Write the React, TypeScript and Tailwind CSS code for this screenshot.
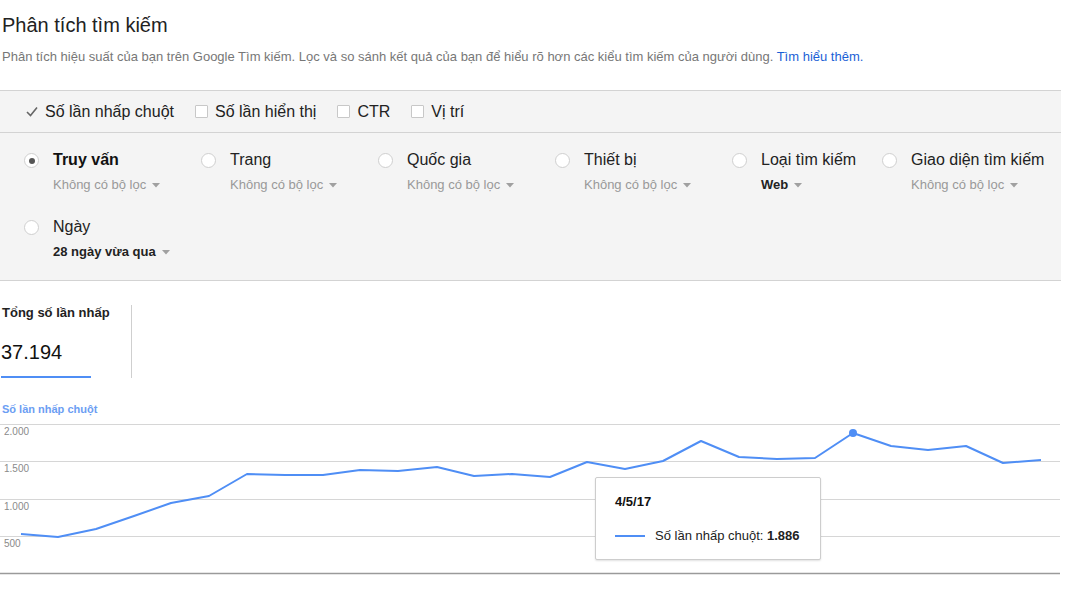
import React from 'react'

const filters = [
  { label: 'Truy vấn', sub: 'Không có bộ lọc', selected: true, w: 'w-[177px]' },
  { label: 'Trang', sub: 'Không có bộ lọc', w: 'w-[177px]' },
  { label: 'Quốc gia', sub: 'Không có bộ lọc', w: 'w-[177px]' },
  { label: 'Thiết bị', sub: 'Không có bộ lọc', w: 'w-[177px]' },
  { label: 'Loại tìm kiếm', sub: 'Web', strong: true, w: 'w-[150px]' },
  { label: 'Giao diện tìm kiếm', sub: 'Không có bộ lọc', w: 'w-[170px]' },
  { label: 'Ngày', sub: '28 ngày vừa qua', strong: true, w: 'w-[177px]' },
]

// pixel points of the clicks line, relative to the chart svg
const points: [number, number][] = [
  [21, 534], [58, 537], [96, 529], [134, 516], [171, 503], [209, 496], [247, 474],
  [285, 475], [323, 475], [360, 470], [398, 471], [437, 467], [474, 476], [512, 474],
  [550, 477], [587, 462], [625, 469], [663, 461], [701, 441], [739, 457], [777, 459],
  [815, 458], [853, 433], [891, 446], [928, 450], [966, 446], [1003, 463], [1041, 460],
]

const CHART_TOP = 416

function Caret() {
  return (
    <svg width="8" height="5" viewBox="0 0 8 5" className="ml-[6px] mt-[1px]">
      <path d="M0 0h8L4 4.5z" fill="#a0a0a0" />
    </svg>
  )
}

function Radio({ on }: { on?: boolean }) {
  return (
    <span className="mt-[3px] flex h-[15px] w-[15px] shrink-0 items-center justify-center rounded-full border border-[#cfcfcf] bg-white">
      {on && <span className="h-[6px] w-[6px] rounded-full bg-[#555]" />}
    </span>
  )
}

function Box() {
  return <span className="h-[13px] w-[13px] rounded-[1px] border border-[#c8c8c8] bg-white" />
}

function Chart() {
  const path = points.map(([x, y], i) => `${i ? 'L' : 'M'}${x} ${y - CHART_TOP}`).join(' ')
  const grid = [424.5, 461.5, 499.5, 536.5].map((y) => y - CHART_TOP)
  const labels = [
    { t: '2.000', y: 19 },
    { t: '1.500', y: 56 },
    { t: '1.000', y: 94 },
    { t: '500', y: 131 },
  ]

  return (
    <div className="relative h-[168px] w-[1061px]">
      <svg width="1061" height="168" className="block">
        {grid.map((y) => (
          <line key={y} x1="0" x2="1060" y1={y} y2={y} stroke="#d6d6d6" strokeWidth="1" />
        ))}
        <line x1="0" x2="1060" y1={573.5 - CHART_TOP} y2={573.5 - CHART_TOP} stroke="#9a9a9a" strokeWidth="1.5" />
        {labels.map((l) => (
          <text key={l.t} x="4" y={l.y} fontSize="10" fill="#8a8a8a" fontFamily="'Liberation Sans', Arial, sans-serif">
            {l.t}
          </text>
        ))}
        <path d={path} fill="none" stroke="#4f8ef5" strokeWidth="2" strokeLinejoin="round" />
        <circle cx="853" cy={433 - CHART_TOP} r="4" fill="#4f8ef5" />
      </svg>

      <div className="absolute left-[595px] top-[61px] h-[83px] w-[226px] rounded-[2px] border border-[#cdcdcd] bg-white px-[19px] pt-[16px] shadow-[0_1px_2px_rgba(0,0,0,0.12)]">
        <p className="text-[13px] font-bold leading-[16px] text-[#111]">4/5/17</p>
        <div className="mt-[18px] flex items-center">
          <span className="h-[2px] w-[30px] bg-[#4f8ef5]" />
          <span className="ml-[10px] text-[13px] leading-[16px] text-[#222]">
            Số lần nhấp chuột: <b>1.886</b>
          </span>
        </div>
      </div>
    </div>
  )
}

export default function App() {
  return (
    <div className="min-h-[591px] bg-white font-['Liberation_Sans',Arial,sans-serif] text-[#222]">
      <div className="w-[1061px]">
        <h1 className="pl-[2px] pt-[13px] text-[20px] font-normal leading-[24px] text-[#222]">Phân tích tìm kiếm</h1>
        <p className="mt-[12px] pl-[2px] text-[13px] leading-[16px] text-[#777]">
          Phân tích hiệu suất của bạn trên Google Tìm kiếm. Lọc và so sánh kết quả của bạn để hiểu rõ hơn các kiểu tìm kiếm
          của người dùng. <span className="text-[#1a5fd6]">Tìm hiểu thêm.</span>
        </p>

        <section className="mt-[25px] border-y border-[#d3d3d3] bg-[#f4f4f4]">
          <div className="flex h-[42px] items-center gap-[21px] border-b border-[#d3d3d3] pl-[26px]">
            <label className="flex items-center gap-[7px]">
              <svg width="12" height="11" viewBox="0 0 12 11">
                <path d="M1 6l3.5 3.5L11 1.5" fill="none" stroke="#666" strokeWidth="1.6" />
              </svg>
              <span className="text-[16px] leading-[20px]">Số lần nhấp chuột</span>
            </label>
            {['Số lần hiển thị', 'CTR', 'Vị trí'].map((m) => (
              <label key={m} className="flex items-center gap-[7px]">
                <Box />
                <span className="text-[16px] leading-[20px]">{m}</span>
              </label>
            ))}
          </div>

          <div className="flex flex-wrap gap-y-[24px] pb-[20px] pl-[24px] pt-[17px]">
            {filters.map((f) => (
              <div key={f.label} className={`flex items-start ${f.w}`}>
                <Radio on={f.selected} />
                <div className="ml-[14px]">
                  <p className={`text-[16px] leading-[20px] ${f.selected ? 'font-bold text-[#111]' : 'text-[#222]'}`}>
                    {f.label}
                  </p>
                  <div className="mt-[7px] flex items-center">
                    <span
                      className={`text-[13px] leading-[16px] ${f.strong ? 'font-bold text-[#222]' : 'text-[#999]'}`}
                    >
                      {f.sub}
                    </span>
                    <Caret />
                  </div>
                </div>
              </div>
            ))}
          </div>
        </section>

        <div className="mt-[24px] flex">
          <div className="w-[132px] border-r border-[#cfcfcf]">
            <p className="pl-[2px] text-[13px] font-bold leading-[16px] text-[#222]">Tổng số lần nhấp</p>
            <p className="mt-[19px] pl-[1px] text-[20px] leading-[24px] text-[#111]">37.194</p>
            <div className="ml-[1px] mt-[12px] h-[2px] w-[90px] bg-[#4f8ef5]" />
          </div>
        </div>

        <p className="mt-[24px] pl-[2px] text-[11px] font-bold leading-[14px] text-[#6c9ef3]">Số lần nhấp chuột</p>
        <Chart />
      </div>
    </div>
  )
}
